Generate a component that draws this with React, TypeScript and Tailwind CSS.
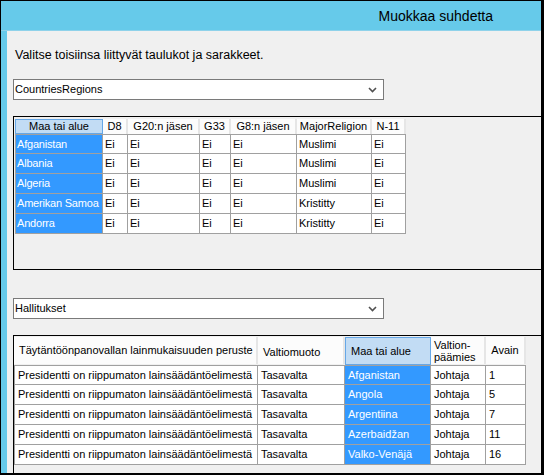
import React from "react";

const F = { fontFamily: '"Liberation Sans", Arial, sans-serif' };

function Chevron() {
  return (
    <svg width="9" height="6" viewBox="0 0 9 6" className="mr-[6px]">
      <polyline points="1,1 4.5,4.5 8,1" fill="none" stroke="#505050" strokeWidth="1.6" />
    </svg>
  );
}

function Dropdown({ label }: { label: string }) {
  return (
    <div className="flex h-[21px] w-[371px] items-center justify-between border border-[#7a7a7a] bg-white">
      <span className="pl-[1px] text-[11px] leading-none text-black">{label}</span>
      <Chevron />
    </div>
  );
}

const t1Cols = "grid-cols-[88px_25px_72px_31px_66px_75px_34px]";
const t1Head = ["Maa tai alue", "D8", "G20:n jäsen", "G33", "G8:n jäsen", "MajorReligion", "N-11"];
const t1Rows = [
  ["Afganistan", "Ei", "Ei", "Ei", "Ei", "Muslimi", "Ei"],
  ["Albania", "Ei", "Ei", "Ei", "Ei", "Muslimi", "Ei"],
  ["Algeria", "Ei", "Ei", "Ei", "Ei", "Muslimi", "Ei"],
  ["Amerikan Samoa", "Ei", "Ei", "Ei", "Ei", "Kristitty", "Ei"],
  ["Andorra", "Ei", "Ei", "Ei", "Ei", "Kristitty", "Ei"],
];

const t2Rows = [
  ["Afganistan", "1"],
  ["Angola", "5"],
  ["Argentiina", "7"],
  ["Azerbaidžan", "11"],
  ["Valko-Venäjä", "16"],
];

function Table1() {
  return (
    <div className={`grid w-max ${t1Cols} text-[11px] text-black`}>
      {t1Head.map((h, i) =>
        i === 0 ? (
          <div key={h} className="flex h-[15px] items-center justify-center border border-[#66a7e6] bg-[#c2dcf4] leading-none">
            {h}
          </div>
        ) : (
          <div key={h} className="flex h-[15px] items-center justify-center border-r-2 border-[#e6e6e6] bg-[#fcfcfc] leading-none">
            {h}
          </div>
        )
      )}
      {t1Rows.map((r, ri) =>
        r.map((c, ci) => (
          <div
            key={`${ri}-${ci}`}
            className={`flex h-[20px] items-center overflow-hidden whitespace-nowrap border-b border-r border-[#a0a0a0] leading-none ${
              ri === 0 ? "border-t" : ""
            } ${ci === 0 ? "border-l bg-[#3399ff] pl-[1px] tracking-[-0.2px] text-white" : "bg-white pl-[2px]"}`}
          >
            {c}
          </div>
        ))
      )}
    </div>
  );
}

function Table2() {
  const cols = "grid-cols-[244px_87px_86px_55px_40px]";
  return (
    <div className={`grid w-max ${cols} text-[11px] text-black`}>
      <div className="flex h-[27px] items-center border-r-2 border-[#e6e6e6] bg-[#fcfcfc] pl-[5px] leading-none">
        Täytäntöönpanovallan lainmukaisuuden peruste
      </div>
      <div className="flex h-[27px] items-center border-r-2 border-[#e6e6e6] bg-[#fcfcfc] pl-[5px] pt-[4px] leading-none">
        Valtiomuoto
      </div>
      <div className="flex h-[28px] items-center border border-[#66a7e6] bg-[#c2dcf4] pl-[5px] leading-none">
        Maa tai alue
      </div>
      <div className="flex h-[27px] flex-col justify-center border-r-2 border-[#e6e6e6] bg-[#fcfcfc] pl-[3px] leading-[12px]">
        <span>Valtion-</span>
        <span>päämies</span>
      </div>
      <div className="flex h-[27px] items-center justify-center border-r-2 border-[#e6e6e6] bg-[#fcfcfc] leading-none">
        Avain
      </div>
      {t2Rows.map((r, ri) => {
        const cells = ["Presidentti on riippumaton lainsäädäntöelimestä", "Tasavalta", r[0], "Johtaja", r[1]];
        return cells.map((c, ci) => (
          <div
            key={`${ri}-${ci}`}
            className={`flex h-[20px] items-center whitespace-nowrap border-b border-r border-[#a0a0a0] pl-[3px] leading-none ${
              ri === 0 ? "border-t" : ""
            } ${ci === 0 ? "border-l" : ""} ${ci === 2 ? "bg-[#3399ff] text-white" : "bg-white"}`}
          >
            {c}
          </div>
        ));
      })}
    </div>
  );
}

export default function App() {
  return (
    <div
      style={F}
      className="flex h-[475px] w-[544px] flex-col overflow-hidden bg-black pb-[2px] pl-[1px] pr-[3px] pt-[1px]"
    >
      <div className="flex flex-1 flex-col overflow-hidden bg-[#66caea]">
        <div className="flex h-[30px] shrink-0 items-center justify-end border-b border-[#8fd2ea] pr-[48px]">
          <span className="text-[14px] leading-none text-black">Muokkaa suhdetta</span>
        </div>
        <div className="ml-[6px] flex flex-1 flex-col overflow-hidden bg-[#f0f0f0] pl-[6px]">
          <div className="mt-[16px] h-[16px] pl-[2px] text-[12.5px] leading-[16px] text-black">
            Valitse toisiinsa liittyvät taulukot ja sarakkeet.
          </div>
          <div className="mt-[16px]">
            <Dropdown label="CountriesRegions" />
          </div>
          <div className="mt-[16px] h-[154px] shrink-0 border-b border-l border-t border-black pl-[1px] pt-[2px]">
            <Table1 />
          </div>
          <div className="mt-[28px]">
            <Dropdown label="Hallitukset" />
          </div>
          <div className="mt-[16px] flex-1 border-l border-t border-black pt-[1px]">
            <Table2 />
          </div>
        </div>
      </div>
    </div>
  );
}
